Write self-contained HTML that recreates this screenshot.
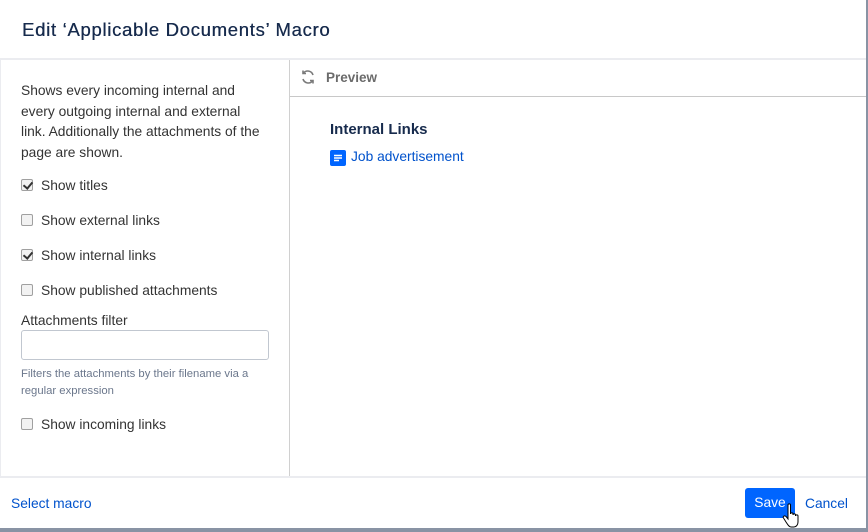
<!DOCTYPE html>
<html><head><style>
*{margin:0;padding:0;box-sizing:border-box}
body{width:868px;height:532px;overflow:hidden;background:#fff;font-family:"Liberation Sans",sans-serif;color:#172b4d;position:relative}
.abs{position:absolute}
.hdr{left:22px;top:19px;font-size:18.5px;font-weight:normal;color:#172b4d;letter-spacing:0.7px;text-shadow:0.3px 0 0 #172b4d}
.t{font-size:13.8px;color:#333;}
.cb{position:absolute;width:12px;height:12px;border:1px solid #a0a0a0;border-radius:2px;background:#f2f2f2}
.cb.c::after{content:"";position:absolute;left:3px;top:0px;width:4px;height:7px;border:solid #333;border-width:0 2px 2px 0;transform:rotate(40deg)}
a{color:#0052cc;text-decoration:none}
</style></head><body>
<div class="abs hdr">Edit ‘Applicable Documents’ Macro</div>
<div class="abs" style="left:0;top:58px;width:866px;height:2px;background:#ebecf0"></div>
<div class="abs" style="left:0;top:60px;width:1px;height:418px;background:#ebecf0"></div>
<div class="abs" style="left:289px;top:60px;width:1px;height:417px;background:#d0d0d0"></div>
<div class="abs" style="left:290px;top:96px;width:576px;height:1px;background:#c8c8c8"></div>
<div class="abs" style="left:0;top:476px;width:866px;height:2px;background:#ebecf0"></div>
<div class="abs" style="left:866px;top:0;width:2px;height:532px;background:#8993a4"></div>
<div class="abs" style="left:0;top:528px;width:868px;height:4px;background:#8993a4"></div>

<div class="abs t" style="left:21px;top:81px;width:240px;line-height:20.5px">Shows every incoming internal and every outgoing internal and external link. Additionally the attachments of the page are shown.</div>
<div class="cb c" style="left:21px;top:179px"></div><div class="abs t" style="left:41px;top:178px">Show titles</div>
<div class="cb" style="left:21px;top:214px"></div><div class="abs t" style="left:41px;top:213px">Show external links</div>
<div class="cb c" style="left:21px;top:249px"></div><div class="abs t" style="left:41px;top:248px">Show internal links</div>
<div class="cb" style="left:21px;top:284px"></div><div class="abs t" style="left:41px;top:283px">Show published attachments</div>
<div class="abs t" style="left:21px;top:313px">Attachments filter</div>
<div class="abs" style="left:21px;top:330px;width:248px;height:30px;border:1px solid #c1c7d0;border-radius:3px"></div>
<div class="abs" style="left:21px;top:366px;width:250px;font-size:11.3px;line-height:17px;color:#6b778c">Filters the attachments by their filename via a regular expression</div>
<div class="cb" style="left:21px;top:418px"></div><div class="abs t" style="left:41px;top:417px">Show incoming links</div>

<svg class="abs" style="left:300px;top:69px" width="16" height="16" viewBox="0 0 16 16" fill="none" stroke="#7a7a7a" stroke-width="1.6"><path d="M13 6A5.5 5.5 0 0 0 3.5 4"/><path d="M3 1.5v3h3"/><path d="M3 10a5.5 5.5 0 0 0 9.5 2"/><path d="M13 14.5v-3h-3"/></svg>
<div class="abs" style="left:326px;top:70px;font-size:13.5px;font-weight:bold;color:#6b6b6b">Preview</div>
<div class="abs" style="left:330px;top:121px;font-size:15px;font-weight:bold;color:#172b4d">Internal Links</div>
<svg class="abs" style="left:330px;top:150px" width="16" height="16" viewBox="0 0 16 16"><rect width="16" height="16" rx="2" fill="#0065ff"/><path d="M4 5.5h8M4 8h8M4 10.5h5" stroke="#fff" stroke-width="1.4"/></svg>
<a class="abs" style="left:351px;top:149px;font-size:13.8px">Job advertisement</a>

<a class="abs" style="left:11px;top:496px;font-size:13.8px">Select macro</a>
<div class="abs" style="left:745px;top:488px;width:50px;height:30px;background:#0065ff;border-radius:3px;color:#fff;font-size:13.8px;text-align:center;line-height:30px">Save</div>
<a class="abs" style="left:805px;top:496px;font-size:13.8px">Cancel</a>
<svg class="abs" style="left:782px;top:503px" width="22" height="26" viewBox="0 0 22 26"><path d="M6 2c0-1.5 2.5-1.5 2.5 0v9c0-1.5 2.5-1.5 2.5 0v1c0-1.5 2.5-1.5 2.5 0v1c0-1.5 2.5-1.5 2.5 0v6c0 3-2 5-4 5H9c-2 0-3-2-5-5l-2.5-4c-1-1.5 1-3 2.5-1.5L6 16z" fill="#fff" stroke="#000" stroke-width="1"/></svg>
</body></html>
